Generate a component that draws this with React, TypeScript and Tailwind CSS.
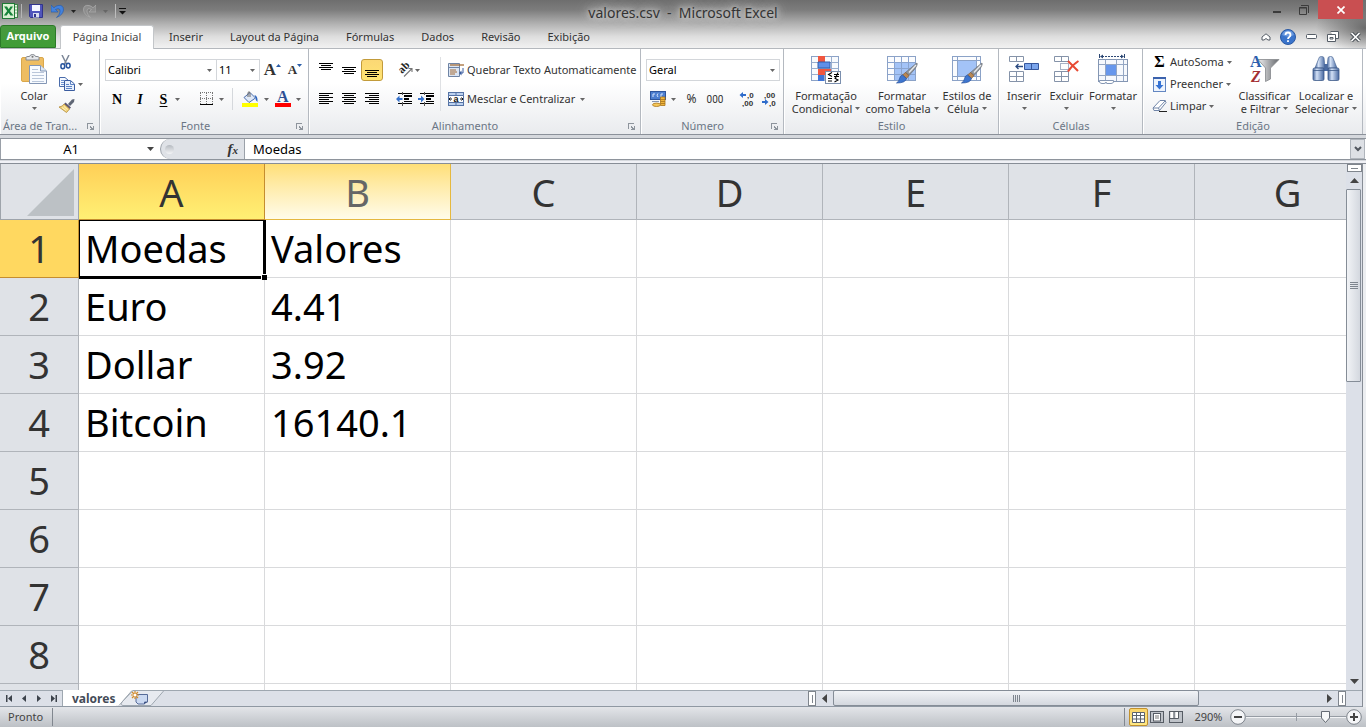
import React from "react";

const UI = "font-['Noto_Sans','Open_Sans',sans-serif]";

/* ---------- small shared pieces ---------- */

function Arrow({ dark = false }: { dark?: boolean }) {
  return (
    <svg width="5" height="3" viewBox="0 0 5 3" className="inline-block shrink-0" aria-hidden="true">
      <path d="M0 0H5L2.5 3Z" fill={dark ? "#222" : "#666"} />
    </svg>
  );
}

function Sep() {
  return <span className="h-[22px] w-px shrink-0 bg-[#d5d8dc]" />;
}

function Btn({ label, className, children }: { label: string; className: string; children: React.ReactNode }) {
  return (
    <button type="button" aria-label={label} className={`flex h-[22px] shrink-0 items-center justify-center ${className}`}>
      {children}
    </button>
  );
}

function Group({ title, launcher = false, className, children }: { title: string; launcher?: boolean; className: string; children: React.ReactNode }) {
  return (
    <section className={`flex h-full flex-col border-r border-[#b4b9c0] border-l border-l-white ${className}`}>
      <div className="flex h-[68px] items-start">{children}</div>
      <div className="relative flex h-[17px] items-center justify-center leading-[17px] text-[#6b7685]">
        <span>{title}</span>
        {launcher && (
          <button type="button" aria-label={`Opções de ${title}`} className="absolute right-[4px] top-[6px]">
            <svg width="8" height="8" viewBox="0 0 8 8" shapeRendering="crispEdges">
              <path d="M0 6V0H6V1H1V6ZM3 3H4V4H5V5H6V3H7V7H3V6H4V5H3Z" fill="#8d949c" />
            </svg>
          </button>
        )}
      </div>
    </section>
  );
}

function Big({ icon, lines, className }: { icon: React.ReactNode; lines: [string, string?]; className: string }) {
  return (
    <button type="button" className={`flex shrink-0 flex-col items-center pt-[5px] ${className}`}>
      <span className="flex h-[30px] items-center">{icon}</span>
      <span className="mt-[5px] whitespace-nowrap leading-[13px]">{lines[0]}</span>
      <span className="flex h-[13px] items-center gap-[3px] whitespace-nowrap leading-[13px]">
        {lines[1]}
        <Arrow />
      </span>
    </button>
  );
}

function Combo({ label, value, className }: { label: string; value: string; className: string }) {
  return (
    <span className={`relative flex h-[22px] shrink-0 items-center ${className}`}>
      <select aria-label={label} className="h-full w-full appearance-none border border-[#d3d6da] bg-white pl-[2px] text-black outline-none">
        <option>{value}</option>
      </select>
      <span className="pointer-events-none absolute right-[5px] flex">
        <Arrow />
      </span>
    </span>
  );
}

/* ---------- icons ---------- */

function Lines({ rows }: { rows: [number, number, number][] }) {
  return (
    <svg width="15" height="14" viewBox="0 0 15 14" shapeRendering="crispEdges">
      {rows.map(([x, y, w]) => (
        <rect key={y} x={x} y={y} width={w} height="1" fill="#000" />
      ))}
    </svg>
  );
}

const PasteIcon = () => (
  <svg width="28" height="30" viewBox="0 0 28 30">
    <rect x="1.500" y="3.500" width="22" height="24" rx="1.500" fill="#eebd62" stroke="#d9a74c" />
    <path d="M6 6V3.500Q6 2.500 8 2.500H9.500Q10 .5 12.500 .5T15.500 2.500H17Q19 2.500 19 3.500V6Z" fill="#e6e8eb" stroke="#83878f" />
    <circle cx="12.500" cy="2.800" r="1" fill="#777" />
    <path d="M9.500 11.500H20.500L26.500 17V29.500H9.500Z" fill="#f8fbff" stroke="#8396b5" />
    <path d="M20.500 11.500V17H26.500" fill="#dce7f5" stroke="#8396b5" />
    <path d="M12 15.500H18M12 18.500H24M12 21.500H24M12 24.500H24M12 27.500H24" stroke="#b9c6da" />
  </svg>
);

const ScissorsIcon = () => (
  <svg width="11" height="15" viewBox="0 0 11 15" fill="none">
    <path d="M2 0L6.500 9M9 0L4.500 9" stroke="#7c8797" strokeWidth="1.500" />
    <ellipse cx="2.800" cy="11.300" rx="1.900" ry="2.500" stroke="#28559e" strokeWidth="1.500" />
    <ellipse cx="8.200" cy="10.600" rx="1.900" ry="2.400" stroke="#28559e" strokeWidth="1.500" />
  </svg>
);

const CopyIcon = () => (
  <svg width="16" height="14" viewBox="0 0 16 14">
    <path d="M.5 .5H6L9.500 3.500V9.500H.5Z" fill="#f5f9ff" stroke="#4a6cab" />
    <path d="M2 3.500H5M2 5.500H5M2 7.500H5" stroke="#6f92cf" />
    <path d="M5.500 3.500H11.500L15.500 7V13.500H5.500Z" fill="#e9f1fd" stroke="#3a5c9f" />
    <path d="M11.500 3.500V7.500H15.500M7 7.500H10M7 9.500H13M7 11.500H13" fill="none" stroke="#5e84c5" />
  </svg>
);

const BrushIcon = () => (
  <svg width="16" height="14" viewBox="0 0 16 14">
    <path d="M9 5L13 .5L15.500 0L15 3L11 7Z" fill="#5f6675" />
    <path d="M6.500 3.500L12 8.500L10.500 10L5 5Z" fill="#5a5572" />
    <path d="M5 5L10.500 10L7.500 13.500L0 8Q4 7.500 5 5Z" fill="#f3d47c" stroke="#b38a35" strokeWidth=".8" />
    <path d="M3 8.500L7 11.500M5 7.500L8.500 10.500" stroke="#fff3bd" />
  </svg>
);

const GridPic = ({ kind }: { kind: "cond" | "table" | "cell" }) => (
  <svg width="31" height="30" viewBox="0 0 31 30">
    {kind === "cond" && (
      <g>
        <rect x=".5" y="2.500" width="27" height="24" fill="#f8fafd" stroke="#8ba2c7" />
        <path d="M7.500 2.500V26.500M13.500 2.500V26.500M20.500 2.500V26.500M.5 8.500H27.500M.5 14.500H27.500M.5 20.500H27.500" stroke="#9aaecd" />
        <path d="M7 2H14V8H7ZM7 15H20V21H7Z" fill="#f0563f" />
        <path d="M7 8H19V14H7Z" fill="#5f8fe8" stroke="#2f5cae" />
        <path d="M7 21H13V27H7Z" fill="#3f74d8" />
        <rect x="14.500" y="17.500" width="15" height="12" fill="#fff" stroke="#7b8fae" />
        <path d="M21 18.500L17.500 20.500L21 22.500M17 24.500H21M17 27H21M23 20.500H28M23 22.500H28M27 18.500L24.500 24M23.500 24L27 26L23.500 28" stroke="#000" strokeWidth="1.100" fill="none" />
      </g>
    )}
    {kind === "table" && (
      <g>
        <rect x=".5" y="2.500" width="28" height="24" fill="#fbfcfe" stroke="#8ba2c7" />
        <path d="M8 9H28V26H8Z" fill="#a3c3f7" />
        <path d="M7.500 2.500V26.500M14.500 2.500V26.500M21.500 2.500V26.500M.5 8.500H28.500M.5 14.500H28.500M.5 20.500H28.500" stroke="#8aa4cf" />
      </g>
    )}
    {kind === "cell" && (
      <g>
        <rect x=".5" y="2.500" width="28" height="24" fill="#fbfcfe" stroke="#8ba2c7" />
        <path d="M5.500 2.500V26.500M24.500 2.500V26.500M.5 6.500H28.500M.5 22.500H28.500" stroke="#8ba2c7" />
        <path d="M6 7H24V22H6Z" fill="#a3c3f7" />
      </g>
    )}
    {kind !== "cond" && (
      <g>
        <path d="M30 9Q31 11 27 16L22 21.500L18.500 18.500L25 13Q28.500 10 30 9Z" fill="#8f959d" stroke="#6d7179" strokeWidth=".7" />
        <path d="M29 11L22 18.500" stroke="#e9ebee" strokeWidth="1.200" />
        <path d="M18.500 18.500L22 21.500L19.500 24.500L15.500 21Z" fill="#b98752" stroke="#7c522b" strokeWidth=".6" />
        <path d="M15.500 21L19.500 24.500Q18.500 29 9.500 29Q12.500 27 12.500 24.500Q13 21.500 15.500 21Z" fill="#3d75cf" stroke="#27509b" strokeWidth=".7" />
      </g>
    )}
  </svg>
);

const InsertIcon = () => (
  <svg width="31" height="30" viewBox="0 0 31 30">
    <path d="M.5 2.500H14.500V7.500H.5ZM7.500 2.500V7.500M.5 17.500H14.500V27.500H.5ZM7.500 17.500V27.500M.5 22.500H14.500" fill="#fff" stroke="#8593a9" />
    <path d="M15.500 9.500H29.500V15.500H15.500ZM22.500 9.500V15.500" fill="#7ba5ec" stroke="#35569c" />
    <path d="M7 12.500H14M9.500 10L7 12.500L9.500 15" fill="none" stroke="#2c4b81" strokeWidth="1.300" />
  </svg>
);

const DeleteIcon = () => (
  <svg width="25" height="30" viewBox="0 0 25 30">
    <path d="M.5 2.500H14.500V7.500H.5ZM7.500 2.500V7.500M.5 17.500H14.500V27.500H.5ZM7.500 17.500V27.500M.5 22.500H14.500" fill="#fff" stroke="#8593a9" />
    <path d="M6.500 9.500H14.500V15.500H6.500Z" fill="none" stroke="#52658a" strokeDasharray="1 1" />
    <path d="M14 7L24 17M24.500 7Q18 11 14 17.500" fill="none" stroke="#e84a33" strokeWidth="2" />
  </svg>
);

const FormatIcon = () => (
  <svg width="31" height="30" viewBox="0 0 31 30">
    <path d="M1.500 0V4M26.500 0V4" stroke="#2c4773" />
    <path d="M4 2.500H24" stroke="#2c4773" strokeDasharray="2 1" />
    <path d="M2 2.500L5 .5V4.500ZM26 2.500L23 .5V4.500Z" fill="#2c4773" />
    <rect x=".5" y="5.500" width="29" height="22" fill="#f5f8fd" stroke="#8496b3" />
    <path d="M7.500 5.500V27M18.500 5.500V27M25.500 5.500V27M1 10.500H29M1 21.500H29" stroke="#93a6c4" />
    <rect x="8" y="11" width="10" height="10" fill="#6696ec" />
    <path d="M1.500 26.500H15.500V28Q15 29.500 13 29.500H9Q8 29.500 8 28Q8 29.500 6 29.500H4Q2 29.500 1.500 28Z" fill="#fff" stroke="#8496b3" />
  </svg>
);

const SortIcon = () => (
  <svg width="31" height="30" viewBox="0 0 31 30" className="overflow-visible">
    <defs>
      <linearGradient id="funnel">
        <stop offset="0" stopColor="#f0f0f0" />
        <stop offset=".5" stopColor="#a9abae" />
        <stop offset="1" stopColor="#66696d" />
      </linearGradient>
    </defs>
    <path d="M9 5.500H30L21.500 14V25L16.500 27.500V14Z" fill="url(#funnel)" stroke="#85888c" strokeWidth=".8" />
    <text x="1" y="13" fontFamily="Liberation Serif, serif" fontWeight="700" fontSize="16" fill="#2c5fae">A</text>
    <text x="2" y="28" fontFamily="Liberation Serif, serif" fontWeight="700" fontStyle="italic" fontSize="16" fill="#a32f33">Z</text>
  </svg>
);

const BinocularsIcon = () => (
  <svg width="28" height="26" viewBox="0 0 28 26">
    <defs>
      <linearGradient id="tube">
        <stop offset="0" stopColor="#45659c" />
        <stop offset=".35" stopColor="#d3e1f6" />
        <stop offset="1" stopColor="#4667a0" />
      </linearGradient>
    </defs>
    <rect x="11" y="8" width="6" height="7" fill="#4a6ba3" />
    <path d="M7 2Q7 .5 9.500 .5T12 2L13 12H3Z" fill="url(#tube)" stroke="#4c6897" strokeWidth=".7" />
    <path d="M16 2Q16 .5 18.500 .5T21 2L25 12H15Z" fill="url(#tube)" stroke="#4c6897" strokeWidth=".7" />
    <rect x="1" y="12" width="11" height="12.500" rx="1.500" fill="url(#tube)" stroke="#3c5988" strokeWidth=".8" />
    <rect x="16" y="12" width="11" height="12.500" rx="1.500" fill="url(#tube)" stroke="#3c5988" strokeWidth=".8" />
    <path d="M1 14.500H12M16 14.500H27" stroke="#3c5988" strokeWidth=".8" />
  </svg>
);

const IndentIcon = ({ right = false }: { right?: boolean }) => (
  <svg width="16" height="15" viewBox="0 0 16 15">
    <g shapeRendering="crispEdges" fill="#000">
      <rect x="2" y="1" width="14" height="1" />
      <rect x="8" y="3" width="8" height="2" />
      <rect x="8" y="6" width="5" height="2" />
      <rect x="8" y="9" width="8" height="1" />
      <rect x="2" y="11" width="14" height="1" />
      <path d="M6 0H7V3H6ZM6 10H7V14H6Z" fill="#555" />
    </g>
    <path d={right ? "M0 6H3V3.500L6.500 7L3 10.500V8H0Z" : "M6.500 6H3.500V3.500L0 7L3.500 10.500V8H6.500Z"} fill="#3672cc" />
  </svg>
);

const DecimalIcon = ({ less = false }: { less?: boolean }) => (
  <svg width="17" height="16" viewBox="0 0 17 16" fontFamily="Liberation Sans, sans-serif" fontSize="8" fontWeight="700">
    <text x={less ? 3 : 8} y="7" fill="#333">{less ? ",00" : ",0"}</text>
    <text x={less ? 8 : 3} y="15" fill="#333">{less ? ",0" : ",00"}</text>
    {less ? (
      <path d="M1 10H4V8L7.500 11L4 14V12H1Z" fill="#2f6ccb" />
    ) : (
      <path d="M7 3H4V1L.5 4L4 7V5H7Z" fill="#2f6ccb" />
    )}
  </svg>
);

/* ---------- window top ---------- */

function TitleBar() {
  return (
    <div className="relative flex h-[25px] items-start justify-between">
      <div className="flex h-[22px] items-center pl-[2px]">
        <svg width="16" height="16" viewBox="0 0 16 16" aria-label="Excel" role="img">
          <rect x="5.500" y="1.500" width="10" height="13" fill="#e9f6e6" stroke="#3c8446" />
          <path d="M9 4H15M9 7H15M9 10H15M12 2V14" stroke="#77ad76" />
          <rect x=".5" y=".5" width="12" height="15" fill="#d9f1d2" stroke="#1f7a35" />
          <path d="M2 3.500H5L6.700 6.300L8.500 3.500H11L8 8L11.500 12.500H8.500L6.500 9.800L4.700 12.500H1.800L5.200 8Z" fill="#17843a" />
        </svg>
        <span className="ml-[3px] h-[14px] w-px bg-[#b5b5b5]" />
        <button type="button" aria-label="Salvar" className="ml-[7px]">
          <svg width="14" height="14" viewBox="0 0 14 14">
            <path d="M.5 .5H13.500V13.500H1.500L.5 12.500Z" fill="#5055bb" stroke="#31348b" />
            <rect x="3" y="1" width="8" height="6" fill="#f4f6ff" />
            <rect x="4" y="9" width="6" height="4.500" fill="#d9ddee" />
            <rect x="5" y="10" width="2" height="3" fill="#31348b" />
          </svg>
        </button>
        <button type="button" aria-label="Desfazer" className="ml-[8px] flex items-center gap-[7px]">
          <svg width="13" height="14" viewBox="0 0 13 14">
            <path d="M0 1V8H7L4.500 5.500Q9.500 3 9 8Q8.500 11 5.500 13.500Q12 11 12.500 6Q12.500 .5 7 1.500Q4.500 2 3 3.800Z" fill="#4482dc" stroke="#2557a6" strokeWidth=".6" />
          </svg>
          <Arrow dark />
        </button>
        <button type="button" aria-label="Refazer" className="ml-[7px] flex items-center gap-[7px]">
          <svg width="13" height="14" viewBox="0 0 13 14">
            <path d="M13 1V8H6L8.500 5.500Q3.500 3 4 8Q4.500 11 7.500 13.500Q1 11 .5 6Q.5 .5 6 1.500Q8.500 2 10 3.800Z" fill="#8c8c8c" stroke="#a9a9a9" strokeWidth=".8" />
          </svg>
          <Arrow />
        </button>
        <span className="ml-[7px] h-[14px] w-px bg-[#bdbdbd]" />
        <button type="button" aria-label="Personalizar" className="ml-[3px]">
          <svg width="7" height="7" viewBox="0 0 7 7">
            <path d="M0 .5H7" stroke="#111" />
            <path d="M0 3H7L3.500 6.500Z" fill="#111" />
          </svg>
        </button>
      </div>
      <h1 className="pointer-events-none absolute inset-x-0 top-[3px] text-center text-[14px] leading-[20px] font-normal whitespace-pre text-[#333] [text-shadow:0_0_5px_#d4d4d4,0_0_8px_#cccccc,0_0_12px_#c4c4c4,0_0_16px_#bbbbbb]">
        valores.csv  -  Microsoft Excel
      </h1>
      <div className="flex h-[19px] items-start pr-[3px]">
        <Btn label="Minimizar" className="w-[26px]">
          <svg width="8" height="2" viewBox="0 0 8 2" className="mt-[2px]"><path d="M0 0H8V2H0Z" fill="#3b3b3b" /></svg>
        </Btn>
        <Btn label="Restaurar" className="w-[28px]">
          <svg width="10" height="10" viewBox="0 0 10 10" className="mb-[3px]">
            <path d="M2 .5H9.500V8M.5 2.500H7.500V9.500H.5ZM.5 3H7.500" fill="none" stroke="#3b3b3b" />
          </svg>
        </Btn>
        <button type="button" aria-label="Fechar" className="flex h-[19px] w-[45px] items-center justify-center bg-[#c94f51]">
          <svg width="8" height="8" viewBox="0 0 8 8"><path d="M.5 .5L7.500 7.500M7.500 .5L.5 7.500" stroke="#fff" strokeWidth="1.700" /></svg>
        </button>
      </div>
    </div>
  );
}

function Tabs() {
  const tabs = ["Inserir", "Layout da Página", "Fórmulas", "Dados", "Revisão", "Exibição"];
  return (
    <nav className="flex h-[24px] items-stretch justify-between border-b border-[#b4b8bd]">
      <div className="flex items-stretch">
        <button type="button" className="mr-[4px] w-[56px] rounded-t-[3px] border border-[#2b7a27] bg-linear-to-b from-[#48983f] to-[#3f9d35] font-bold text-white">Arquivo</button>
        <button type="button" className="-mb-px w-[94px] rounded-t-[3px] border border-b-0 border-[#c3c6c9] bg-white text-[#444]">Página Inicial</button>
        <div className="flex items-stretch gap-px pt-[2px] pl-[2px] text-[#333]">
          {tabs.map((t) => (
            <button key={t} type="button" className="px-[13px]">{t}</button>
          ))}
        </div>
      </div>
      <div className="flex items-center">
        <Btn label="Minimizar a Faixa de Opções" className="w-[20px]">
          <svg width="10" height="8" viewBox="0 0 10 8"><path d="M1 4L5 .8L9 4V7H7L5 5.500L3 7H1Z" fill="#fff" stroke="#555d66" /></svg>
        </Btn>
        <Btn label="Ajuda" className="w-[24px]">
          <svg width="16" height="16" viewBox="0 0 16 16">
            <circle cx="8" cy="8" r="7.500" fill="#3a74cb" stroke="#2a59a3" />
            <path d="M2 6A6.300 6.300 0 0 1 14 6Q8 9 2 6Z" fill="#7fa9e6" opacity=".7" />
            <path d="M5.500 6Q5.500 3.500 8 3.500T10.500 6Q10.500 7 9.300 7.900Q8 8.800 8 10M8 11.300V13" fill="none" stroke="#fff" strokeWidth="1.800" />
          </svg>
        </Btn>
        <Btn label="Minimizar janela" className="w-[22px]">
          <svg width="11" height="5" viewBox="0 0 11 5"><rect x=".5" y=".5" width="10" height="4" rx="1" fill="#fff" stroke="#555d66" /></svg>
        </Btn>
        <Btn label="Restaurar janela" className="w-[22px]">
          <svg width="12" height="11" viewBox="0 0 12 11">
            <path d="M3.500 .5H11.500V7.500H8" fill="#fff" stroke="#555d66" />
            <path d="M.5 3.500H8.500V10.500H.5Z" fill="#fff" stroke="#555d66" />
            <path d="M3 6.500H6V8H3Z" fill="none" stroke="#555d66" />
          </svg>
        </Btn>
        <Btn label="Fechar janela" className="w-[22px]">
          <svg width="11" height="10" viewBox="0 0 11 10">
            <path d="M1.500 1L9.500 9M9.500 1L1.500 9" stroke="#4a5057" strokeWidth="3.600" />
            <path d="M1.500 1L9.500 9M9.500 1L1.500 9" stroke="#fff" strokeWidth="1.700" />
          </svg>
        </Btn>
      </div>
    </nav>
  );
}

/* ---------- ribbon ---------- */

function Ribbon() {
  return (
    <div className="flex h-[86px] shrink-0 overflow-hidden border-b border-[#8b919a] bg-linear-to-b from-white from-40% to-[#e9ebee] text-[#333]">
      <Group title="Área de Tran..." launcher className="w-[100px] [&>div:last-child]:justify-start [&>div:last-child]:pl-[2px]">
        <Big icon={<PasteIcon />} lines={["Colar"]} className="ml-[9px] w-[48px]" />
        <div className="flex flex-col">
          <Btn label="Recortar" className="mt-[2px] w-[15px]"><ScissorsIcon /></Btn>
          <Btn label="Copiar" className="w-[26px] gap-[3px]"><CopyIcon /><Arrow /></Btn>
          <Btn label="Pincel de Formatação" className="w-[17px]"><BrushIcon /></Btn>
        </div>
      </Group>

      <Group title="Fonte" launcher className="w-[209px] [&>div:last-child]:pr-[18px]">
        <div className="flex flex-col gap-[7px] pt-[10px] pl-[4px]">
          <div className="flex">
            <Combo label="Fonte" value="Calibri" className="w-[112px]" />
            <Combo label="Tamanho da fonte" value="11" className="-ml-px w-[44px]" />
            <Btn label="Aumentar fonte" className="ml-px w-[23px] items-start font-['Liberation_Serif',serif] text-[17px] font-bold leading-[22px] text-[#333]">
              A<svg width="5" height="3" viewBox="0 0 5 3" className="mt-[5px]"><path d="M0 3H5L2.500 0Z" fill="#2b5da8" /></svg>
            </Btn>
            <Btn label="Diminuir fonte" className="w-[22px] font-['Liberation_Serif',serif] text-[13px] font-bold leading-[22px] text-[#333]">
              A<svg width="5" height="3" viewBox="0 0 5 3" className="mb-[10px]"><path d="M0 0H5L2.500 3Z" fill="#2b5da8" /></svg>
            </Btn>
          </div>
          <div className="flex items-center font-['Liberation_Serif',serif] text-[14px] text-black">
            <Btn label="Negrito" className="w-[24px] font-bold">N</Btn>
            <Btn label="Itálico" className="w-[22px] font-bold italic">I</Btn>
            <Btn label="Sublinhado" className="w-[34px] gap-[8px] pl-[4px] font-bold underline underline-offset-2">S<Arrow /></Btn>
            <span className="ml-[3px]"><Sep /></span>
            <Btn label="Bordas" className="w-[44px] gap-[6px] pl-[4px]">
              <svg width="13" height="14" viewBox="0 0 13 14" shapeRendering="crispEdges">
                <path d="M.5 1V12M6.500 1V12M12.500 1V12M0 .5H13M0 6.500H13" stroke="#777" strokeDasharray="1 1" />
                <path d="M0 12.500H13" stroke="#000" />
              </svg>
              <Arrow />
            </Btn>
            <Sep />
            <Btn label="Cor de preenchimento" className="w-[40px] gap-[5px] pl-[4px]">
              <svg width="17" height="17" viewBox="0 0 17 17">
                <path d="M2 6.500L8 1.500L13.500 7L7 11.500Z" fill="#dfe9f8" stroke="#4a6cab" />
                <path d="M6 6V1.500Q7 0 8 1.500V6" fill="none" stroke="#666" />
                <path d="M12.500 4Q16 5 15.500 11Q13 9 13.500 7Z" fill="#2e67c0" />
                <rect x="0" y="12" width="16" height="4" fill="#ffff00" />
              </svg>
              <Arrow />
            </Btn>
            <Btn label="Cor da fonte" className="w-[30px] gap-[5px]">
              <svg width="16" height="17" viewBox="0 0 16 17" className="shrink-0">
                <text x="2" y="11" fontFamily="Liberation Serif, serif" fontSize="16" fontWeight="700" fill="#2c4f94">A</text>
                <rect x="0" y="12" width="16" height="4" fill="#ff0000" />
              </svg>
              <Arrow />
            </Btn>
          </div>
        </div>
      </Group>

      <Group title="Alinhamento" launcher className="w-[332px] [&>div:last-child]:pr-[20px]">
        <div className="flex flex-col gap-[7px] pt-[10px] pl-[5px]">
          <div className="flex">
            <Btn label="Alinhar em cima" className="w-[23px]"><Lines rows={[[0, 0, 14], [2, 2, 10], [0, 4, 14], [2, 6, 10]]} /></Btn>
            <Btn label="Alinhar no meio" className="w-[23px]"><Lines rows={[[0, 4, 14], [2, 6, 10], [0, 8, 14], [2, 10, 10]]} /></Btn>
            <Btn label="Alinhar embaixo" className="w-[22px] rounded-[3px] border border-[#c29b3a] bg-linear-to-b from-[#fbd875] to-[#ffe473]"><Lines rows={[[0, 7, 14], [2, 9, 10], [0, 11, 14], [2, 13, 10]]} /></Btn>
            <span className="ml-[5px]"><Sep /></span>
            <Btn label="Orientação" className="ml-[2px] w-[36px] gap-px">
              <svg width="17" height="16" viewBox="0 0 17 16" className="overflow-visible">
                <text x="0" y="0" transform="translate(5 12) rotate(-45)" fontFamily="Liberation Serif, serif" fontSize="11" fontWeight="700" fill="#222">ab</text>
                <path d="M7 14.500L15 6.500M11.500 6.500H15V10" fill="none" stroke="#777" strokeWidth="1.100" />
              </svg>
              <Arrow />
            </Btn>
          </div>
          <div className="flex">
            <Btn label="Alinhar à esquerda" className="w-[23px]"><Lines rows={[[0, 1, 14], [0, 3, 10], [0, 5, 14], [0, 7, 10], [0, 9, 14], [0, 11, 10]]} /></Btn>
            <Btn label="Centralizar" className="w-[23px]"><Lines rows={[[0, 1, 14], [2, 3, 10], [0, 5, 14], [2, 7, 10], [0, 9, 14], [2, 11, 10]]} /></Btn>
            <Btn label="Alinhar à direita" className="w-[22px]"><Lines rows={[[0, 1, 14], [4, 3, 10], [0, 5, 14], [4, 7, 10], [0, 9, 14], [4, 11, 10]]} /></Btn>
            <span className="ml-[5px]"><Sep /></span>
            <Btn label="Diminuir recuo" className="ml-[5px] w-[22px]"><IndentIcon /></Btn>
            <Btn label="Aumentar recuo" className="w-[22px]"><IndentIcon right /></Btn>
          </div>
        </div>
        <span className="mt-[8px] ml-[3px] h-[54px] w-px bg-[#dfe1e4]" />
        <div className="ml-[7px] flex flex-col gap-[7px] pt-[10px]">
          <button type="button" className="flex h-[22px] items-center gap-[3px] whitespace-nowrap">
            <svg width="16" height="16" viewBox="0 0 16 16">
              <path d="M.5 1.500H11.500V14.500H.5Z" fill="#dbe5f3" stroke="#6f84a5" />
              <path d="M1 5.500H11" stroke="#6f84a5" />
              <path d="M2 3H16" stroke="#a56d36" strokeWidth="1.300" />
              <path d="M2 8H8M2 10H9M2 12H7" stroke="#a56d36" />
              <path d="M15 6V11H13" stroke="#3a5c9f" fill="none" />
              <path d="M13.500 8.500V13.500L11 11Z" fill="#3a5c9f" />
            </svg>
            Quebrar Texto Automaticamente
          </button>
          <button type="button" className="flex h-[22px] items-center gap-[3px] whitespace-nowrap">
            <svg width="16" height="14" viewBox="0 0 16 14">
              <rect x=".5" y=".5" width="15" height="13" fill="#bcd1ef" stroke="#5573a5" />
              <path d="M8 .5V3.500M8 10.500V13.500" stroke="#5573a5" />
              <path d="M.5 3.500H15.500V10.500H.5Z" fill="#fff" stroke="#5573a5" />
              <text x="5.500" y="9.500" fontFamily="Liberation Sans, sans-serif" fontSize="9" fontWeight="700" fill="#111">a</text>
              <path d="M1 7H4M12 7H15M2.500 5.500L1 7L2.500 8.500M13.500 5.500L15 7L13.500 8.500" stroke="#111" fill="none" />
            </svg>
            Mesclar e Centralizar
            <span className="ml-[2px] flex"><Arrow /></span>
          </button>
        </div>
      </Group>

      <Group title="Número" launcher className="w-[143px] [&>div:last-child]:pr-[20px]">
        <div className="flex flex-col gap-[7px] pt-[10px] pl-[4px]">
          <Combo label="Formato de número" value="Geral" className="w-[134px]" />
          <div className="flex items-center">
            <Btn label="Formato de contabilização" className="w-[34px] gap-[5px]">
              <svg width="16" height="16" viewBox="0 0 16 16">
                <rect x=".5" y=".5" width="15" height="8" fill="#4d7fd0" stroke="#2e559c" />
                <path d="M3 6V3H5M8 2.500Q6 4 8 6M11 6V3H13" stroke="#d5e4fb" fill="none" />
                <path d="M10.500 6H15V14.500H10.500Z" fill="#f0b63d" stroke="#a8731b" strokeWidth=".8" />
                <path d="M10.500 8.500H15M10.500 10.500H15M10.500 12.500H15" stroke="#a8731b" strokeWidth=".8" />
                <ellipse cx="6.500" cy="13.800" rx="4" ry="1.700" fill="#f6c85a" stroke="#a8731b" strokeWidth=".8" />
                <path d="M2 10.500H9" stroke="#8797b3" />
              </svg>
              <Arrow />
            </Btn>
            <Btn label="Estilo de porcentagem" className="w-[23px] text-[12px]">%</Btn>
            <Btn label="Separador de milhares" className="w-[24px] font-['Roboto',sans-serif] text-[10px]">000</Btn>
            <span className="ml-[4px]"><Sep /></span>
            <Btn label="Aumentar casas decimais" className="ml-[6px] w-[21px]"><DecimalIcon /></Btn>
            <Btn label="Diminuir casas decimais" className="w-[22px]"><DecimalIcon less /></Btn>
          </div>
        </div>
      </Group>

      <Group title="Estilo" className="w-[215px]">
        <Big icon={<GridPic kind="cond" />} lines={["Formatação", "Condicional"]} className="ml-[3px] w-[76px]" />
        <Big icon={<GridPic kind="table" />} lines={["Formatar", "como Tabela"]} className="w-[76px]" />
        <Big icon={<GridPic kind="cell" />} lines={["Estilos de", "Célula"]} className="w-[54px]" />
      </Group>

      <Group title="Células" className="w-[144px]">
        <Big icon={<InsertIcon />} lines={["Inserir"]} className="ml-[3px] w-[42px]" />
        <Big icon={<DeleteIcon />} lines={["Excluir"]} className="w-[43px]" />
        <Big icon={<FormatIcon />} lines={["Formatar"]} className="w-[50px]" />
      </Group>

      <Group title="Edição" className="w-[220px]">
        <div className="flex w-[90px] flex-col pt-[2px] pl-[8px]">
          <button type="button" className="flex h-[22px] items-center gap-[3px] whitespace-nowrap">
            <span className="w-[15px] text-center font-['Liberation_Serif',serif] text-[16px] font-bold text-black">Σ</span>
            AutoSoma <Arrow />
          </button>
          <button type="button" className="flex h-[22px] items-center gap-[3px] whitespace-nowrap">
            <svg width="15" height="16" viewBox="0 0 15 16">
              <rect x="1.500" y="1.500" width="12" height="14" fill="#eef4fd" stroke="#6487c2" />
              <path d="M1 2H14" stroke="#3b62ad" strokeWidth="2" />
              <path d="M6 5H9V9H11.500L7.500 13.500L3.500 9H6Z" fill="#3673d4" />
            </svg>
            Preencher <Arrow />
          </button>
          <button type="button" className="flex h-[22px] items-center gap-[3px] whitespace-nowrap">
            <svg width="15" height="14" viewBox="0 0 15 14">
              <path d="M1 9L8 1.500H13L14 3.500L7.500 11.500H2Z" fill="#fff" stroke="#7085a8" />
              <path d="M1 9H6.500L13.500 1.500M6.500 9L7.500 11.500" fill="none" stroke="#7085a8" />
              <path d="M7 12.500H15" stroke="#222" />
            </svg>
            Limpar <Arrow />
          </button>
        </div>
        <Big icon={<SortIcon />} lines={["Classificar", "e Filtrar"]} className="w-[61px]" />
        <Big icon={<BinocularsIcon />} lines={["Localizar e", "Selecionar"]} className="w-[62px]" />
      </Group>
    </div>
  );
}

function FormulaBar() {
  return (
    <div className="flex h-[29px] shrink-0 flex-col border-b border-[#878d96] bg-[#d5d8dd] pt-[3px]">
      <div className="flex h-[22px] items-stretch border-y border-[#8e949c] bg-white text-[13px] text-black">
        <div className="flex w-[160px] items-center border-l border-[#9aa0a8] pr-[6px]">
          <input aria-label="Caixa de nome" defaultValue="A1" className="w-full min-w-0 flex-1 bg-transparent pt-px pr-[6px] text-center outline-none" />
          <svg width="7" height="4" viewBox="0 0 7 4"><path d="M0 0H7L3.500 4Z" fill="#444" /></svg>
        </div>
        <div className="flex w-[85px] items-center justify-between rounded-l-full border-x border-[#9ba1a9] bg-[#dfe2e7] pr-[6px] pl-[4px]">
          <span className="h-[9px] w-[9px] rounded-full bg-linear-to-b from-[#b5bac0] to-[#f4f5f7]" />
          <button type="button" aria-label="Inserir função" className="font-['Liberation_Serif',serif] text-[15px] leading-[18px] font-bold text-[#333] italic">
            f<span className="text-[11px]">x</span>
          </button>
        </div>
        <input aria-label="Barra de fórmulas" defaultValue="Moedas" className="min-w-0 flex-1 pt-px pl-[8px] outline-none" />
        <button type="button" aria-label="Expandir barra de fórmulas" className="mr-px flex w-[15px] items-center justify-center border border-[#b0b5bc] bg-[#dde0e5]">
          <svg width="8" height="6" viewBox="0 0 8 6"><path d="M1 1L4 4L7 1" fill="none" stroke="#50565e" strokeWidth="2" /></svg>
        </button>
      </div>
      <span className="mt-px h-[2px] bg-[#f0f1f6]" />
    </div>
  );
}

/* ---------- worksheet ---------- */

const COLS = ["A", "B", "C", "D", "E", "F", "G"];
const DATA: string[][] = [
  ["Moedas", "Valores"],
  ["Euro", "4.41"],
  ["Dollar", "3.92"],
  ["Bitcoin", "16140.1"],
  [],
  [],
  [],
  [],
  [],
];

function Sheet() {
  return (
    <div className="min-w-0 flex-1 overflow-hidden bg-white">
      <table className="w-[1381px] table-fixed border-separate border-spacing-0 text-[38px] leading-[56px]">
        <colgroup>
          <col className="w-[79px]" />
          {COLS.map((c) => (
            <col key={c} className="w-[186px]" />
          ))}
        </colgroup>
        <thead>
          <tr className="h-[56px]">
            <td className="border-r border-b border-l border-[#9ea4ab] bg-[#dfe2e7] p-0">
              <button type="button" aria-label="Selecionar tudo" className="flex h-[55px] w-full items-end justify-end pr-[4px] pb-[3px]">
                <svg width="47" height="47" viewBox="0 0 47 47"><path d="M47 0V47H0Z" fill="#bcc1c5" /></svg>
              </button>
            </td>
            {COLS.map((c, i) => (
              <th
                key={c}
                scope="col"
                className={`border-r border-b p-0 font-normal ${
                  i === 0
                    ? "border-[#c58d2f] bg-linear-to-b from-[#ffcf57] to-[#fff074] text-[#333]"
                    : i === 1
                      ? "border-[#e5b83f] bg-linear-to-b from-[#ffdf77] to-[#fffce9] text-[#666]"
                      : "border-[#b0b4ba] bg-[#dfe2e7] text-[#333]"
                }`}
              >
                <div className="h-[55px] leading-[57px]">{c}</div>
              </th>
            ))}
          </tr>
        </thead>
        <tbody>
          {DATA.map((row, r) => (
            <tr key={r} className="h-[58px]">
              <th
                scope="row"
                className={`border-r border-b p-0 font-normal text-[#333] ${
                  r === 0 ? "border-[#c58d2f] bg-[#ffd860]" : "border-[#b0b4ba] bg-[#dfe2e7]"
                }`}
              >
                <div className="h-[57px] leading-[57px]">{r < 8 ? r + 1 : ""}</div>
              </th>
              {COLS.map((c, i) => (
                <td key={c} className="relative border-r border-b border-[#d9dadc] p-0 pl-[6px] text-black">
                  <div className="h-[57px] leading-[57px] whitespace-nowrap">{row[i]}</div>
                  {r === 0 && i === 0 && (
                    <span className="absolute top-0 -right-[2px] -bottom-[2px] left-0 z-10 border-t border-r-3 border-b-3 border-l border-black">
                      <span className="absolute -right-[4px] -bottom-[4px] h-[6px] w-[6px] border-t border-l border-white bg-black" />
                    </span>
                  )}
                </td>
              ))}
            </tr>
          ))}
        </tbody>
      </table>
    </div>
  );
}

function VScroll() {
  return (
    <div className="flex w-[16px] shrink-0 flex-col items-stretch bg-[#dce0e8]">
      <span className="ml-px flex h-[8px] w-[15px] items-center justify-center border border-[#7f858d] bg-white">
        <span className="h-px w-[7px] bg-[#7f858d]" />
      </span>
      <button type="button" aria-label="Rolar para cima" className="flex h-[17px] items-center justify-center">
        <svg width="9" height="5" viewBox="0 0 9 5"><path d="M0 5H9L4.500 0Z" fill="#444" /></svg>
      </button>
      <div className="flex-1">
        <span className="flex h-[193px] w-[15px] flex-col items-center justify-center gap-px rounded-[1px] border border-[#858d97] bg-linear-to-r from-[#f1f3f6] to-[#d4d8df]">
          {[0, 1, 2, 3].map((n) => (
            <span key={n} className="h-px w-[8px] bg-[#7e858e]" />
          ))}
        </span>
      </div>
      <button type="button" aria-label="Rolar para baixo" className="flex h-[17px] items-center justify-center">
        <svg width="9" height="5" viewBox="0 0 9 5"><path d="M0 0H9L4.500 5Z" fill="#444" /></svg>
      </button>
    </div>
  );
}

function SplitBox() {
  return (
    <span className="flex h-[15px] w-[8px] shrink-0 items-center justify-center border border-[#7f858d] bg-white">
      <span className="h-[8px] w-px bg-[#7f858d]" />
    </span>
  );
}

function SheetTabs() {
  const nav: [string, string][] = [
    ["Primeira planilha", "M0 0H1.500V7H0ZM6 0V7L2 3.500Z"],
    ["Planilha anterior", "M5 0V7L1 3.500Z"],
    ["Próxima planilha", "M1 0V7L5 3.500Z"],
    ["Última planilha", "M0 0V7L4 3.500ZM4.500 0H6V7H4.500Z"],
  ];
  return (
    <div className="flex h-[17px] shrink-0 border-t border-b border-t-[#9ea7b0] border-b-[#8f98a3] bg-[#dce0e8]">
      <div className="flex w-[62px] items-center gap-px pl-[2px]">
        {nav.map(([label, d]) => (
          <button key={label} type="button" aria-label={label} className="flex h-[15px] w-[14px] items-center justify-center">
            <svg width="6" height="7" viewBox="0 0 6 7"><path d={d} fill="#3c424b" /></svg>
          </button>
        ))}
      </div>
      <button type="button" className="-mt-px h-[16px] border-l border-[#9ea7b0] bg-white pr-[1px] pl-[9px] text-[12px] leading-[18px] font-bold text-[#444b57]">valores</button>
      <button type="button" aria-label="Inserir planilha" className="-mt-px">
        <svg width="52" height="16" viewBox="0 0 52 16">
          <path d="M0 0H17L4 15.500H0Z" fill="#fff" />
          <path d="M7 15.500Q4 15 6 12L17 .5H48L35 15.500Z" fill="#e7eaf0" stroke="#9ea7b0" />
          <path d="M3 15.500L16 .5" stroke="#9ea7b0" />
          <path d="M20 4.500H31.500V12H28.500V14H22L20 12Z" fill="#cbd9f1" stroke="#566b98" />
          <path d="M28.500 12V14L31.500 12Z" fill="#384e80" />
          <path d="M19 1V9M15 5H23M16 2L22 8M22 2L16 8" stroke="#d58b28" strokeWidth="1.200" />
          <circle cx="19" cy="5" r="1.500" fill="#fff" />
        </svg>
      </button>
      <span className="min-w-0 flex-1" />
      <div className="flex w-[538px] items-stretch">
        <SplitBox />
        <button type="button" aria-label="Rolar para a esquerda" className="flex w-[17px] items-center justify-center">
          <svg width="5" height="9" viewBox="0 0 5 9"><path d="M5 0V9L0 4.500Z" fill="#444" /></svg>
        </button>
        <div className="flex-1">
          <span className="-mt-px flex h-[16px] w-[366px] items-center justify-center gap-px rounded-[2px] border border-[#858d97] bg-linear-to-b from-[#f1f3f6] to-[#d4d8df]">
            {[0, 1, 2, 3].map((n) => (
              <span key={n} className="h-[7px] w-px bg-[#7e858e]" />
            ))}
          </span>
        </div>
        <button type="button" aria-label="Rolar para a direita" className="flex w-[18px] items-center justify-center">
          <svg width="5" height="9" viewBox="0 0 5 9"><path d="M0 0V9L5 4.500Z" fill="#444" /></svg>
        </button>
        <SplitBox />
      </div>
      <span className="w-[16px] shrink-0" />
    </div>
  );
}

function StatusBar() {
  return (
    <footer className="flex h-[20px] shrink-0 items-center bg-linear-to-b from-[#e3e5e9] to-[#bdc1c6] text-[#444]">
      <span className="pl-[8px]">Pronto</span>
      <span className="ml-[9px] h-[18px] w-px bg-[#81878f]" />
      <span className="flex-1" />
      <span className="h-[18px] w-px bg-[#81878f]" />
      <button type="button" aria-label="Normal" className="ml-[4px] flex h-[18px] w-[19px] items-center justify-center rounded-[2px] border border-[#c2912e] bg-linear-to-b from-[#fbd56a] to-[#ffe984]">
        <svg width="13" height="11" viewBox="0 0 13 11"><path d="M.5 .5H12.500V10.500H.5ZM4.500 .5V10.500M8.500 .5V10.500M.5 3.500H12.500M.5 7H12.500" fill="#fff" stroke="#5c636c" /></svg>
      </button>
      <button type="button" aria-label="Layout da Página" className="ml-[2px]">
        <svg width="14" height="12" viewBox="0 0 14 12">
          <rect x=".5" y=".5" width="13" height="11" fill="#bfc3c9" stroke="#565c64" />
          <rect x="3.500" y="2.500" width="7" height="7.500" fill="#fff" stroke="#565c64" />
          <path d="M5 5H9M5 7H9" stroke="#777" />
        </svg>
      </button>
      <button type="button" aria-label="Visualização da Quebra de Página" className="ml-[5px]">
        <svg width="14" height="12" viewBox="0 0 14 12">
          <rect x=".5" y=".5" width="13" height="11" fill="#bfc3c9" stroke="#565c64" />
          <path d="M1.500 1H4.500V7H1.500ZM6.500 1H9.500V7H6.500Z" fill="#fff" />
          <path d="M5 1V7.500M.5 7.500H9.500V1" fill="none" stroke="#565c64" />
        </svg>
      </button>
      <button type="button" className="ml-[11px] w-[29px] text-center whitespace-nowrap">290%</button>
      <button type="button" aria-label="Menos zoom" className="ml-[7px]">
        <svg width="16" height="16" viewBox="0 0 16 16">
          <circle cx="8" cy="8" r="7.300" fill="#f4f5f7" stroke="#7d838b" />
          <path d="M4 8H12" stroke="#444" strokeWidth="2" />
        </svg>
      </button>
      <span className="relative h-[16px] w-[100px]">
        <svg width="100" height="16" viewBox="0 0 100 16" className="block" aria-hidden="true">
          <path d="M0 7.500H100" stroke="#969ca4" />
          <path d="M0 8.500H100" stroke="#f2f3f5" />
          <path d="M50.500 4V12" stroke="#969ca4" />
          <path d="M75.500 2.500H83.500V9L79.500 13.500L75.500 9Z" fill="#f7f8f9" stroke="#656b74" />
        </svg>
        <input type="range" aria-label="Zoom" min={10} max={400} defaultValue={290} className="absolute inset-0 h-full w-full opacity-0" />
      </span>
      <button type="button" aria-label="Mais zoom" className="mr-[4px]">
        <svg width="16" height="16" viewBox="0 0 16 16">
          <circle cx="8" cy="8" r="7.300" fill="#f4f5f7" stroke="#7d838b" />
          <path d="M4 8H12M8 4V12" stroke="#444" strokeWidth="2" />
        </svg>
      </button>
    </footer>
  );
}

export default function App() {
  return (
    <div className={`flex h-screen w-full flex-col overflow-hidden bg-[#dce0e8] text-[11px] ${UI}`}>
      <header className="shrink-0 bg-[radial-gradient(ellipse_50px_26px_at_100%_28px,#555555cc,transparent),linear-gradient(to_bottom,#6e6e6e,#7c7c7c_20%,#b4b4b4_50%,#dedede_75%,#f3f3f3)]">
        <TitleBar />
        <Tabs />
      </header>
      <Ribbon />
      <FormulaBar />
      <div className="flex min-h-0 flex-1">
        <div className="flex min-w-0 flex-1 flex-col">
          <div className="flex min-h-0 flex-1">
            <Sheet />
            <VScroll />
          </div>
          <SheetTabs />
        </div>
        <span className="w-[4px] shrink-0 border-l border-[#878d96] bg-[#eceef1]" />
      </div>
      <StatusBar />
    </div>
  );
}
